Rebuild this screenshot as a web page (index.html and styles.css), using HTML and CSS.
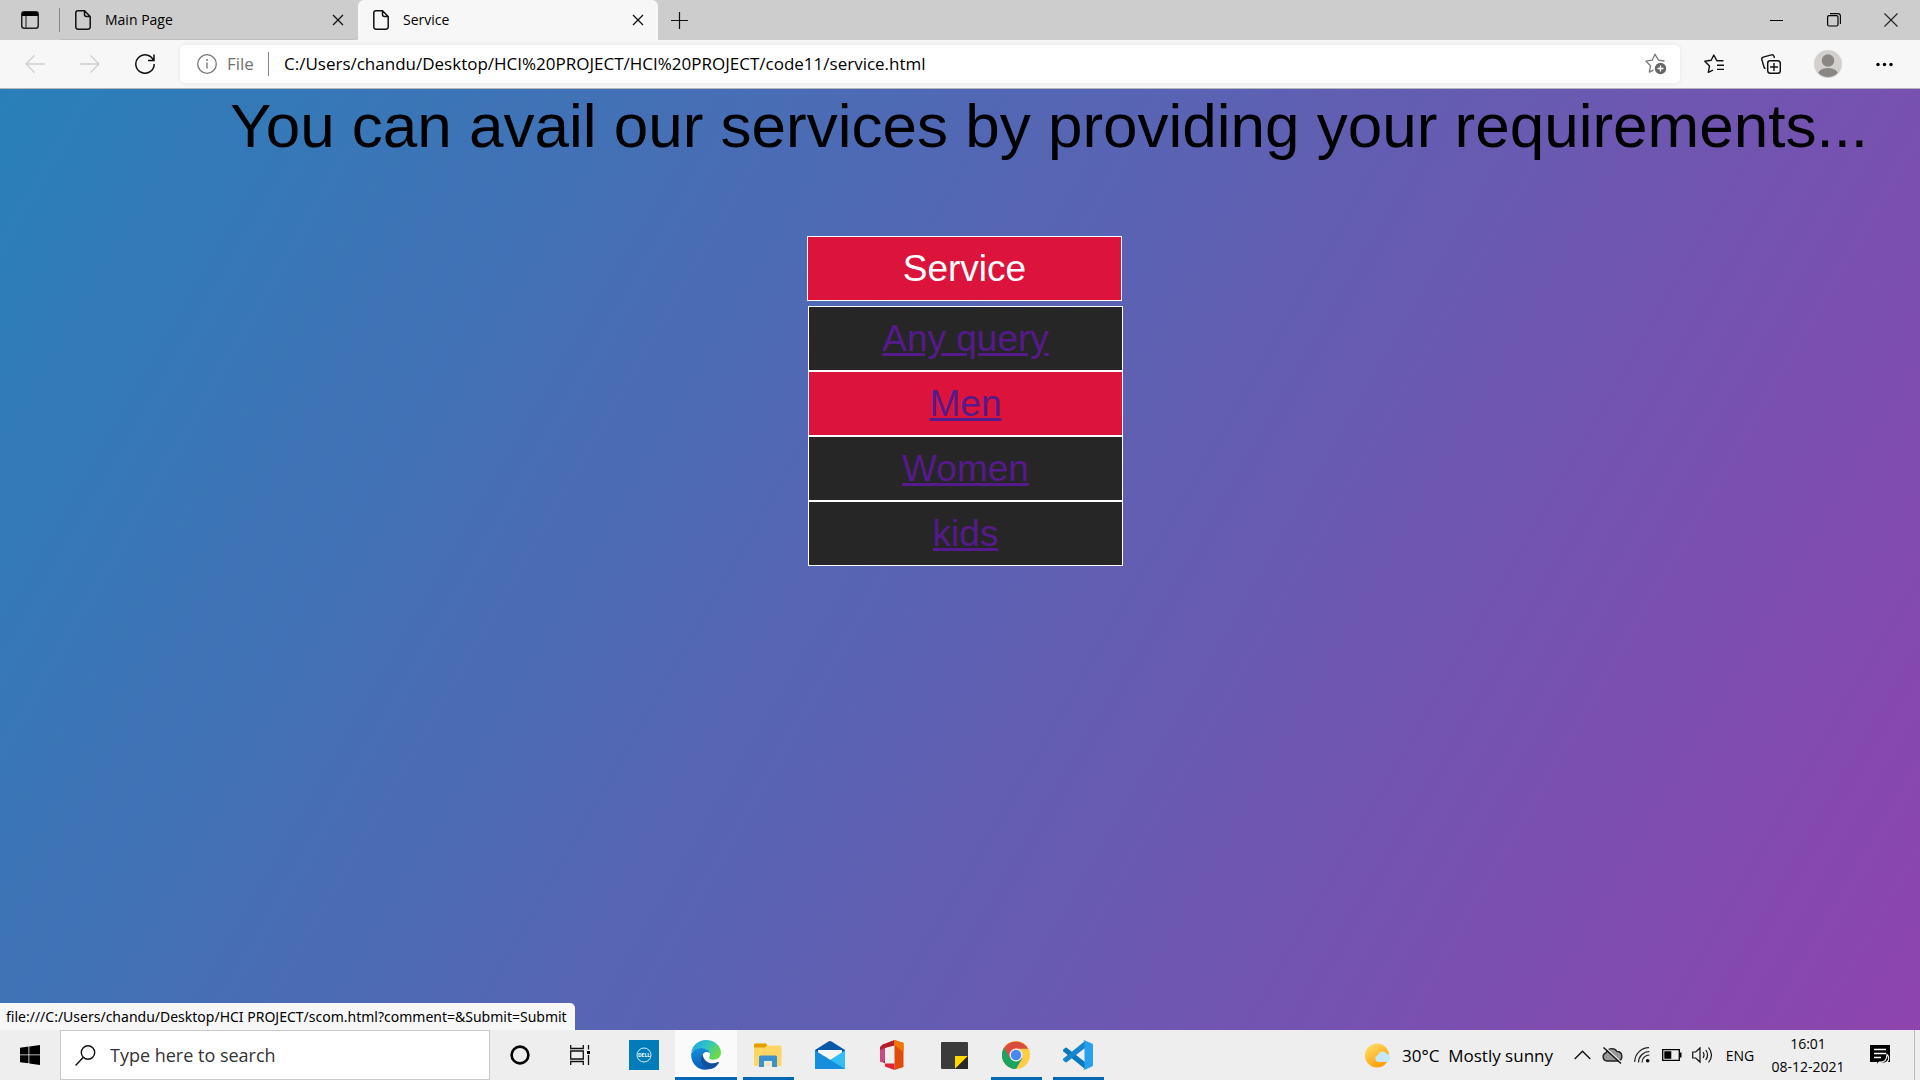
FILE: index.html
```html
<!DOCTYPE html>
<html lang="en">
<head>
<meta charset="utf-8">
<title>Service</title>
<link rel="stylesheet" href="styles.css">
</head>
<body>
<div class="screen">
  <header class="tabbar">
    <button class="tab-actions" aria-label="Tab actions">
      <svg width="18" height="18" viewBox="0 0 18 18"><rect x=".75" y=".75" width="16.5" height="16.5" rx="2.5" fill="none" stroke="#222" stroke-width="1.5"/><path d="M1 5V3a2 2 0 0 1 2-2h12a2 2 0 0 1 2 2v2z" fill="#000"/><path d="M5 5v12" stroke="#333" stroke-width="1.2"/></svg>
    </button>
    <div class="tab">
      <svg class="doc" width="16" height="20" viewBox="0 0 16 20"><path d="M3 .8h6.5L15.200 6.500V17a2.200 2.200 0 0 1-2.200 2.200H3A2.200 2.200 0 0 1 .8 17V3A2.200 2.200 0 0 1 3 .8zM9.500 1v3.500a2 2 0 0 0 2 2H15" fill="none" stroke="#111" stroke-width="1.5"/></svg>
      <span class="tab-title">Main Page</span>
      <button class="tab-close" aria-label="Close tab"><svg width="12" height="12" viewBox="0 0 12 12"><path d="M1 1l10 10M11 1L1 11" stroke="#111" stroke-width="1.3"/></svg></button>
    </div>
    <div class="tab active">
      <svg class="doc" width="16" height="20" viewBox="0 0 16 20"><path d="M3 .8h6.500L15.200 6.500V17a2.200 2.200 0 0 1-2.200 2.200H3A2.200 2.200 0 0 1 .8 17V3A2.200 2.200 0 0 1 3 .8zM9.500 1v3.500a2 2 0 0 0 2 2H15" fill="none" stroke="#111" stroke-width="1.5"/></svg>
      <span class="tab-title">Service</span>
      <button class="tab-close" aria-label="Close tab"><svg width="12" height="12" viewBox="0 0 12 12"><path d="M1 1l10 10M11 1L1 11" stroke="#111" stroke-width="1.3"/></svg></button>
    </div>
    <button class="new-tab" aria-label="New tab"><svg width="17" height="17" viewBox="0 0 17 17"><path d="M8.500 0v17M0 8.500h17" stroke="#111" stroke-width="1.2"/></svg></button>
    <div class="window-buttons">
      <button aria-label="Minimize"><svg width="14" height="14" viewBox="0 0 14 14"><path d="M0 7.500h13" stroke="#000"/></svg></button>
      <button aria-label="Restore"><svg width="14" height="14" viewBox="0 0 14 14"><rect x=".6" y="2.600" width="10.400" height="10.400" rx="1.500" fill="none" stroke="#000" stroke-width="1.200"/><path d="M3 .6h8A2.400 2.400 0 0 1 13.400 3v8" fill="none" stroke="#000" stroke-width="1.100"/></svg></button>
      <button aria-label="Close"><svg width="14" height="14" viewBox="0 0 14 14"><path d="M.5.5l13 13M13.500.5l-13 13" stroke="#222" stroke-width="1.100"/></svg></button>
    </div>
  </header>

  <div class="toolbar">
    <div class="nav-buttons">
      <button aria-label="Back" disabled><svg width="20" height="18" viewBox="0 0 20 18"><path d="M20 9H1M9.500.6L1 9l8.500 8.400" fill="none" stroke="#cfcfcf" stroke-width="1.400"/></svg></button>
      <button aria-label="Forward" disabled><svg width="20" height="18" viewBox="0 0 20 18"><path d="M0 9h19M10.500.6L19 9l-8.500 8.400" fill="none" stroke="#cfcfcf" stroke-width="1.400"/></svg></button>
      <button aria-label="Refresh"><svg width="20" height="20" viewBox="0 0 20 20"><path d="M18.500 6.500A9.200 9.200 0 1 0 19.200 10M19 .5v6h-6" fill="none" stroke="#111" stroke-width="1.500"/></svg></button>
    </div>
    <div class="address">
      <svg width="20" height="20" viewBox="0 0 20 20"><circle cx="10" cy="10" r="9.300" fill="none" stroke="#777" stroke-width="1.300"/><path d="M10 8.500v6" stroke="#777" stroke-width="1.400"/><circle cx="10" cy="5.900" r="1" fill="#777"/></svg>
      <label class="scheme" for="url">File</label>
      <input id="url" type="text" value="C:/Users/chandu/Desktop/HCI%20PROJECT/HCI%20PROJECT/code11/service.html">
      <button aria-label="Add to favorites"><svg width="22" height="22" viewBox="0 0 22 22"><path d="M19.500 8l-6-.9L10 1.300 7.200 7.200.9 8.100l4.600 4.600-1.200 6.500 4.200-2" fill="none" stroke="#777" stroke-width="1.300" stroke-linejoin="round"/><circle cx="15.500" cy="15.500" r="5.700" fill="#666"/><path d="M15.500 12.500v6M12.500 15.500h6" stroke="#fff" stroke-width="1.300"/></svg></button>
    </div>
    <div class="tools">
      <button aria-label="Favorites"><svg width="20" height="20" viewBox="0 0 20 20"><path d="M19.500 6.700h-6.700L9.800 1 7.200 6.300l-6.400.9 4.700 4.700-1.200 6.500 4.700-2.300M13 11.200h7M13 15.400h7" fill="none" stroke="#111" stroke-width="1.400" stroke-linejoin="round"/></svg></button>
      <button aria-label="Collections"><svg width="20" height="20" viewBox="0 0 20 20"><rect x="6.700" y="6.700" width="12.600" height="12.600" rx="2.500" fill="none" stroke="#111" stroke-width="1.500"/><path d="M13 9v8M9 13h8M13.500 4l-.6-1.800A2 2 0 0 0 10.400.9L2.200 3.200A2 2 0 0 0 .9 5.700l2.200 7.500a2 2 0 0 0 1.400 1.400" fill="none" stroke="#111" stroke-width="1.400"/></svg></button>
      <button aria-label="Profile"><svg width="28" height="28" viewBox="0 0 28 28"><defs><clipPath id="face"><circle cx="14" cy="14" r="13"/></clipPath></defs><circle cx="14" cy="14" r="14" fill="#d2d0ce"/><g clip-path="url(#face)" fill="#8a8683"><circle cx="14" cy="10.500" r="6.200"/><ellipse cx="14" cy="25" rx="10.500" ry="7"/></g></svg></button>
      <button aria-label="Settings and more"><svg width="17" height="5" viewBox="0 0 17 5"><circle cx="2" cy="2.500" r="1.700"/><circle cx="8.500" cy="2.500" r="1.700"/><circle cx="15" cy="2.500" r="1.700"/></svg></button>
    </div>
  </div>

  <main class="page">
    <h1>You can avail our services by providing your requirements...</h1>
    <nav class="menu" aria-label="Services">
      <div class="menu-title">Service</div>
      <ul>
        <li><a href="#query">Any query</a></li>
        <li class="current"><a href="#men">Men</a></li>
        <li><a href="#women">Women</a></li>
        <li><a href="#kids">kids</a></li>
      </ul>
    </nav>
    <div class="link-status">file:///C:/Users/chandu/Desktop/HCI PROJECT/scom.html?comment=&amp;Submit=Submit</div>
  </main>

  <footer class="taskbar">
    <button class="start" aria-label="Start"><svg width="20" height="20" viewBox="0 0 20 20"><path d="M0 2.800L8.500 1.600v7.900H0zM9.300 1.500L20 0v9.500H9.300zM0 10.300h8.500v8L0 17.200zM9.300 10.300H20V20L9.300 18.500z"/></svg></button>
    <label class="search">
      <svg width="21" height="21" viewBox="0 0 21 21"><circle cx="13" cy="7.500" r="6.700" fill="none" stroke="#111" stroke-width="1.400"/><path d="M8.300 12.300L.6 20.400" stroke="#111" stroke-width="1.500"/></svg>
      <input type="text" placeholder="Type here to search" aria-label="Search">
    </label>
    <div class="shell-buttons">
      <button aria-label="Cortana"><svg width="20" height="20" viewBox="0 0 20 20"><circle cx="10" cy="10" r="8.400" fill="none" stroke="#000" stroke-width="2.600"/></svg></button>
      <button aria-label="Task view"><svg width="21" height="20" viewBox="0 0 21 20"><path d="M.7 0v3.500h12.600V0M.7 20v-3.500h12.600V20M.7 6h12.600v8H.7zM18.500 0v4.500M18.500 10v10" fill="none" stroke="#111" stroke-width="1.300"/><rect x="17" y="6" width="3" height="3"/></svg></button>
    </div>
    <div class="apps">
      <button aria-label="Dell"><svg width="30" height="30" viewBox="0 0 30 30"><rect width="30" height="30" fill="#007db8"/><circle cx="15" cy="15" r="7" fill="none" stroke="#d8eef8" stroke-width="1"/><text x="15" y="17" text-anchor="middle" class="dell-text">DELL</text></svg></button>
      <button class="open focused" aria-label="Edge"><svg width="30" height="30" viewBox="0 0 30 30"><defs><linearGradient id="e1" x2="1" y2=".5"><stop stop-color="#1b9de2"/><stop offset=".5" stop-color="#2fc2c8"/><stop offset="1" stop-color="#68dc45"/></linearGradient><linearGradient id="e2" y2="1" x2=".3"><stop stop-color="#1593df"/><stop offset="1" stop-color="#0a5cb5"/></linearGradient></defs><path d="M.2 13C1.200 5.500 7.300 0 15 0c9 0 15 6.200 15 12.500 0 4.300-3.200 7.200-7.300 7.200-3.400 0-5.100-1.200-4.500-2.200 2.500-3.800-.8-8.500-6.500-8.500C5.500 9 1.500 11 .2 13z" fill="url(#e1)"/><path d="M.1 14C1.500 10.500 5.500 8.200 10 8.200c5 0 8.400 2.300 8.700 5.100-2-2.300-7.300-1.800-7.300 3.500C11.400 23 17 27.500 24 25.800 20 29.700 13.500 31 8.500 28.600 3 26 0 20.500.1 14z" fill="url(#e2)"/><path d="M11.700 14.500c-2.500 3-2.300 8 1.300 11.500 2.500 2.600 6 3.700 8.500 2.600 2.500-1 4.700-3 6.300-5.600.5-.9-.2-1.300-1-.9-6.300 3-14.300.2-15.100-7.600z" fill="#124f9c"/></svg></button>
      <button class="open" aria-label="File Explorer"><svg width="28" height="24" viewBox="0 0 28 24"><path d="M0 2a1.500 1.500 0 0 1 1.500-1.500h10l2 2H26a1.500 1.500 0 0 1 1.500 1.500v19H1.500A1.500 1.500 0 0 1 0 22z" fill="#ffd564"/><path d="M0 4.500V2A1.500 1.500 0 0 1 1.500.5h10.300l1.400 1.700L11 4.500z" fill="#dfa000"/><path d="M5 24V14a1.500 1.500 0 0 1 1.500-1.500h15A1.500 1.500 0 0 1 23 14v10h-5v-6h-8v6z" fill="#3c8fd0"/><path d="M10 18h8v6h-8z" fill="#f3e9c8"/></svg></button>
      <button aria-label="Mail"><svg width="30" height="28" viewBox="0 0 30 28"><path d="M0 9L13.500.5a3 3 0 0 1 3 0L30 9v3H0z" fill="#0757a9"/><path d="M3 9h24v11H3z" fill="#f7f7f7"/><path d="M0 9.500L15 19 30 9.500V28H0z" fill="#33bdf2"/><path d="M0 9.500L30 28H0z" fill="#168ddd"/></svg></button>
      <button aria-label="Office"><svg width="24" height="30" viewBox="0 0 24 30"><path d="M14.500 0L2.500 4.500 0 7v13.500l5 3V8l9.500-2.500z" fill="#b51d2a"/><path d="M0 10v11.500l1.500 1 3.500-2V8z" fill="#c94782"/><path d="M14.500 0L23.500 3v24l-9 3z" fill="#e04b09"/><path d="M14.500 0L23.500 3v9l-9-7z" fill="#f17800"/><path d="M5 23.500h9.500V30L5 26.500z" fill="#e12337"/></svg></button>
      <button aria-label="Sticky Notes"><svg width="27" height="27" viewBox="0 0 27 27"><rect width="27" height="27" rx="1" fill="#3b3b3b"/><path d="M14 14h13L14 27z" fill="#ffd800"/><path d="M27 14v13H14z" fill="#292929"/></svg></button>
      <button class="open" aria-label="Chrome"><svg width="28" height="28" viewBox="0 0 28 28"><circle cx="14" cy="14" r="14" fill="#fc4"/><path d="M14 14L1.900 7A14 14 0 0 0 14 28l6.100-10.500z" fill="#1da261"/><path d="M1.900 7A14 14 0 0 1 26.100 7.700H14L7.900 17.500z" fill="#dc4b40"/><path d="M1.900 7l6 10.500L14 21l-2 6.900A14 14 0 0 1 1.900 7z" fill="#1da261"/><circle cx="14" cy="14" r="6.500" fill="#f3f3f3"/><circle cx="14" cy="14" r="5.200" fill="#4688f1"/></svg></button>
      <button class="open" aria-label="Visual Studio Code"><svg width="30" height="30" viewBox="0 0 30 30"><path d="M0 10l2-2q1-.8 2 0l18 14v7L.4 11.600Q-.5 10.800 0 10z" fill="#0878bf"/><path d="M0 20l2 2q1 .8 2 0L22 8V1L.4 18.400Q-.5 19.200 0 20z" fill="#1685cd"/><path d="M22 .5L29 3.500q1 .4 1 1.500v20q0 1.100-1 1.500L22 29.700q-1.200.5-2-.5 1.500.6 1.500-1V2Q21.500.4 20 1q.8-1 2-.5z" fill="#27a0ee"/></svg></button>
    </div>
    <div class="tray">
      <button class="weather"><svg width="25" height="25" viewBox="0 0 25 25"><defs><linearGradient id="sun" x2=".6" y2="1"><stop stop-color="#ffe270"/><stop offset="1" stop-color="#ff9d08"/></linearGradient></defs><circle cx="12" cy="12.500" r="12" fill="url(#sun)"/><path d="M13.500 19a3.600 3.600 0 0 1-.3-7.100 4.800 4.800 0 0 1 8.800-.8 4 4 0 0 1-.5 7.900z" fill="#c5e8fb"/></svg><span>30°C&nbsp; Mostly sunny</span></button>
      <div class="tray-icons">
        <button aria-label="Show hidden icons"><svg width="17" height="10" viewBox="0 0 17 10"><path d="M.7 9l7.800-7.800L16.300 9" fill="none" stroke="#111" stroke-width="1.400"/></svg></button>
        <button aria-label="OneDrive"><svg width="21" height="17" viewBox="0 0 21 17"><path d="M5 14a4.300 4.300 0 0 1-.8-8.400A6 6 0 0 1 15 4.500 4.800 4.800 0 0 1 16 14z" fill="#999" stroke="#222" stroke-width="1.400"/><path d="M3 0l17.500 16.500" stroke="#eee" stroke-width="1.400"/><path d="M1.500.5L19 16.500" stroke="#111" stroke-width="1.400"/></svg></button>
        <button aria-label="Wi-Fi"><svg width="16" height="16" viewBox="0 0 16 16"><g fill="none" stroke="#222" stroke-width="1.200"><path d="M.7 15A14.300 14.300 0 0 1 15 .7M4.500 15.500A11 11 0 0 1 15.500 4.500M8 15.500A7.500 7.500 0 0 1 15.500 8"/></g><circle cx="13.700" cy="13.700" r="1.800"/></svg></button>
        <button aria-label="Battery"><svg width="20" height="12" viewBox="0 0 20 12"><path d="M.7.7h16.600v10.600H.7z" fill="none" stroke="#000" stroke-width="1.300"/><path d="M2.300 2.300h7v7.400h-7zM18 3.500h1.500v5H18z"/></svg></button>
        <button aria-label="Volume"><svg width="21" height="18" viewBox="0 0 21 18"><path d="M.7 6v6h3L8 16V2L3.700 6zM11 6q2 3 0 6M13.800 4q3.500 5 0 10M16.500 1.500q6 7.500 0 15" fill="none" stroke="#111" stroke-width="1.200"/></svg></button>
      </div>
      <button class="lang">ENG</button>
      <button class="clock"><time>16:01</time><time>08-12-2021</time></button>
      <button class="notify" aria-label="Notifications"><svg width="21" height="20" viewBox="0 0 21 20"><path d="M0 0h20v17H8l-1 2v-2H0z"/><path d="M4 4.500h12M4 8.500h12M4 12.500h7" stroke="#fff" stroke-width="1.300"/><path d="M17 9.500a4.800 4.800 0 1 1-6.500 7.500q6 .3 6.500-7.500z" fill="#111" stroke="#eee" stroke-width="1.200"/></svg></button>
      <button class="show-desktop" aria-label="Show desktop"></button>
    </div>
  </footer>
</div>
</body>
</html>
```
FILE: styles.css
```css
* {
  box-sizing: border-box;
}

body {
  margin: 0;
  font-family: "Open Sans", "Noto Sans", sans-serif;
  color: #000;
}

button {
  display: flex;
  align-items: center;
  justify-content: center;
  flex: none;
  padding: 0;
  border: 0;
  background: none;
  font: inherit;
  color: inherit;
}

input {
  flex: 1;
  min-width: 0;
  padding: 0;
  border: 0;
  outline: 0;
  background: none;
  font: inherit;
  color: inherit;
}

svg {
  flex: none;
}

.screen {
  display: flex;
  flex-direction: column;
  min-height: 100vh;
}

/* Tab strip */
.tabbar {
  display: flex;
  height: 40px;
  background: #cdcdcd;
}

.tab-actions {
  width: 60px;
  background: linear-gradient(#888, #888) right center / 1px 24px no-repeat;
}

.tab {
  display: flex;
  align-items: center;
  width: 298px;
  padding: 0 12px 0 15px;
  font-size: 14px;
  border-bottom: 1px solid #bebebe;
  border-bottom-right-radius: 6px;
}

.tab.active {
  width: 300px;
  background: #f7f7f7;
  border-color: #f7f7f7;
  border-radius: 6px 6px 0 0;
}

.tab-title {
  flex: 1;
  margin-left: 14px;
}

.tab-close {
  width: 16px;
  height: 24px;
}

.new-tab {
  width: 42px;
}

.window-buttons {
  display: flex;
  margin-left: auto;
  padding-right: 1px;
}

.window-buttons button {
  width: 57px;
}

/* Address bar */
.toolbar {
  display: flex;
  align-items: center;
  height: 49px;
  background: #f7f7f7;
  border-bottom: 1px solid #b5b5b5;
}

.nav-buttons {
  display: flex;
  width: 180px;
  padding-left: 7px;
}

.nav-buttons button {
  width: 55px;
}

.address {
  display: flex;
  flex: 1;
  align-items: center;
  height: 38px;
  padding: 0 13px 0 17px;
  background: #fff;
  border-radius: 5px;
  box-shadow: 0 0 4px #e4e4e4;
  font-size: 17px;
}

.address input {
  height: 25px;
  padding-bottom: 2px;
}

.scheme {
  width: 42px;
  margin: 0 15px 0 10px;
  border-right: 1px solid #888;
  color: #707070;
  line-height: 24px;
}

.tools {
  display: flex;
  padding: 0 7px 0 5px;
}

.tools button {
  width: 57px;
}

/* Page */
.page {
  display: flex;
  flex: 1;
  flex-direction: column;
  background: linear-gradient(120deg, #2980b9, #8e44ad);
  font-family: "Liberation Sans", Arial, sans-serif;
}

h1 {
  margin: 0;
  padding: 1px 0 0 230px;
  font-size: 62px;
  font-weight: 400;
  line-height: 72px;
  white-space: nowrap;
}

.menu {
  width: 316px;
  margin: 74px auto 0;
  translate: 5px;
  font-size: 37px;
  line-height: 63px;
  text-align: center;
}

.menu-title,
.menu li {
  width: 315px;
  border: 1px solid #fff;
}

.menu-title {
  margin-bottom: 5px;
  background: #dc143c;
  color: #fff;
}

.menu ul {
  margin: 0 0 0 1px;
  padding: 0;
  list-style: none;
}

.menu li {
  background: #262626;
}

.menu .current {
  background: #dc143c;
}

.menu a {
  color: #551a8b;
}

.link-status {
  width: fit-content;
  margin-top: auto;
  padding: 0 8px 0 6px;
  background: #f7f7f7;
  border-top-right-radius: 5px;
  font: 14px/27px "Noto Sans", "Open Sans", sans-serif;
}

/* Taskbar */
.taskbar {
  display: flex;
  height: 50px;
  background: #eee;
}

.start {
  width: 60px;
}

.search {
  display: flex;
  align-items: center;
  gap: 14px;
  width: 430px;
  padding-left: 14px;
  background: #fff;
  border: 1px solid #c8c8c8;
  font-size: 18px;
}

.search input::placeholder {
  color: #333;
  opacity: 1;
}

.shell-buttons {
  display: flex;
  padding-right: 3px;
}

.shell-buttons button {
  width: 60px;
}

.apps {
  display: flex;
}

.apps button {
  width: 62px;
}

.apps .open {
  background: linear-gradient(#0067b4, #0067b4) center bottom / 51px 3px no-repeat;
}

.apps .focused {
  background: linear-gradient(#0067b4, #0067b4) center bottom / 62px 3px no-repeat #fafafa;
}

.dell-text {
  font: 700 5px "Open Sans", sans-serif;
  fill: #fff;
}

.tray {
  display: flex;
  margin-left: auto;
}

.weather {
  gap: 12px;
  font-size: 17px;
}

.tray-icons {
  display: flex;
  margin-left: 14px;
}

.tray-icons button {
  width: 30px;
}

.lang {
  width: 53px;
  padding-right: 7px;
  font-size: 14px;
}

.clock {
  flex-direction: column;
  width: 76px;
  font-size: 14px;
  line-height: 23px;
}

.notify {
  width: 68px;
}

.show-desktop {
  width: 6px;
  border-left: 1px solid #bbb;
}
```
